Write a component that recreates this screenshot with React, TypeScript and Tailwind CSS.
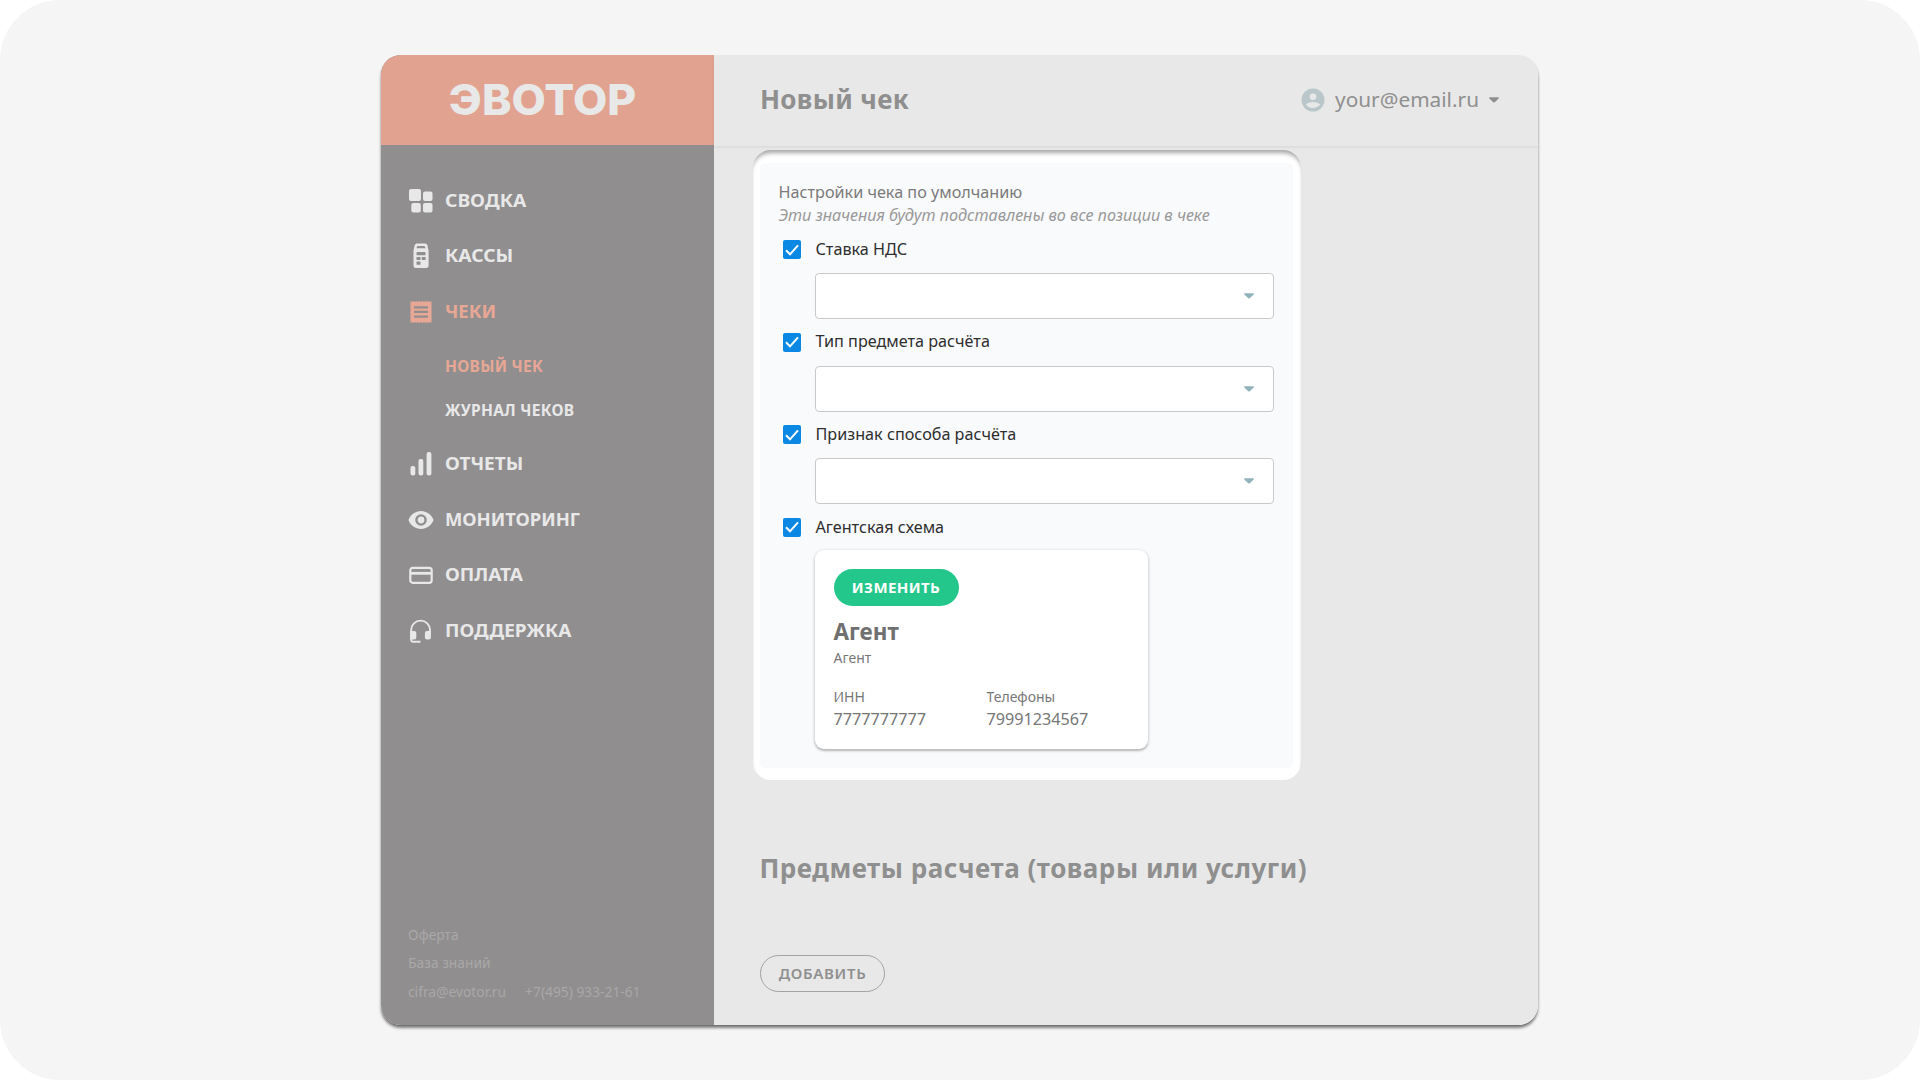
import type { ReactNode } from 'react'

const NAV_TOP = [
  { label: 'СВОДКА', icon: <DashboardIcon />, stretch: 'scale-x-[1.13]' },
  { label: 'КАССЫ', icon: <TerminalIcon />, stretch: 'scale-x-[1.13]' },
  { label: 'ЧЕКИ', icon: <ReceiptIcon />, stretch: 'scale-x-[1.09]', active: true },
]

const NAV_BOTTOM = [
  { label: 'ОТЧЕТЫ', icon: <BarsIcon />, stretch: 'scale-x-[1.12]' },
  { label: 'МОНИТОРИНГ', icon: <EyeIcon />, stretch: 'scale-x-[1.08]' },
  { label: 'ОПЛАТА', icon: <CardIcon />, stretch: 'scale-x-[1.12]' },
  { label: 'ПОДДЕРЖКА', icon: <HeadsetIcon />, stretch: 'scale-x-[1.115]' },
]

const SETTINGS = ['Ставка НДС', 'Тип предмета расчёта', 'Признак способа расчёта']

function DashboardIcon() {
  return (
    <svg width="26" height="26" viewBox="0 0 26 26" fill="currentColor">
      <rect x="1" y="1" width="12" height="12" rx="2" />
      <rect x="15" y="3.5" width="9.5" height="9.5" rx="2" />
      <rect x="3.3" y="15" width="9.5" height="9.5" rx="2" />
      <rect x="15" y="15" width="9.5" height="9.5" rx="2" />
    </svg>
  )
}

function TerminalIcon() {
  return (
    <svg width="26" height="26" viewBox="0 0 26 26">
      <path d="M8.500.5h9a2.500 2.500 0 0 1 2 2l.6 3 .5 2v15a2.500 2.500 0 0 1-2.500 2.500H8a2.500 2.500 0 0 1-2.500-2.500v-15l.5-2 .6-3a2.500 2.500 0 0 1 2-2z" fill="currentColor" />
      <g fill="#908e8f">
        <path d="M9.500 3h7l1.200 2.200H8.300z" />
        <rect x="8.500" y="9" width="9" height="3.300" rx=".8" />
        <rect x="8.500" y="14" width="4" height="3" rx=".5" />
        <rect x="13.800" y="14" width="3.800" height="3" rx=".5" />
        <rect x="8.500" y="18.500" width="4" height="3.200" rx=".5" />
      </g>
    </svg>
  )
}

function ReceiptIcon() {
  return (
    <svg width="26" height="26" viewBox="0 0 26 26">
      <path
        d="M2.500 2l1.500 1 1.500-1L7 3l1.500-1L10 3l1.500-1L13 3l1.500-1L16 3l1.500-1L19 3l1.500-1L22 3l1.500-1v22L22 23l-1.500 1-1.500-1-1.500 1-1.500-1-1.500 1-1.500-1-1.500 1-1.500-1-1.500 1L7 23l-1.500 1L4 23l-1.500 1z"
        fill="currentColor"
      />
      <path d="M6 8.300h14M6 12.900h14M6 17.600h14" stroke="#908e8f" strokeWidth="2.200" />
    </svg>
  )
}

function BarsIcon() {
  return (
    <svg width="26" height="26" viewBox="0 0 26 26" fill="currentColor">
      <rect x="2.500" y="15" width="4.800" height="9.500" rx="2" />
      <rect x="10.500" y="8" width="4.800" height="16.500" rx="2" />
      <rect x="18.600" y="1" width="4.800" height="23.500" rx="2" />
    </svg>
  )
}

function EyeIcon() {
  return (
    <svg width="26" height="26" viewBox="0 0 26 26">
      <path d="M.5 13C2.500 7.600 7.400 4 13 4s10.500 3.600 12.500 9c-2 5.400-6.900 9-12.500 9S2.500 18.400.5 13z" fill="currentColor" />
      <circle cx="13" cy="13" r="4.600" fill="none" stroke="#908e8f" strokeWidth="2.400" />
    </svg>
  )
}

function CardIcon() {
  return (
    <svg width="26" height="26" viewBox="0 0 26 26" fill="none" stroke="currentColor">
      <rect x="2.300" y="5.800" width="21.400" height="15" rx="2.500" strokeWidth="2.200" />
      <path d="M2.500 11.300h21" strokeWidth="2.800" />
    </svg>
  )
}

function HeadsetIcon() {
  return (
    <svg width="26" height="26" viewBox="0 0 26 26">
      <path d="M3.200 21V12a9.400 9.400 0 0 1 18.800 0v4" fill="none" stroke="currentColor" strokeWidth="1.900" />
      <path d="M2.300 13h4a2 2 0 0 1 2 2v4.500a2 2 0 0 1-2 2h-4zM22.900 13h-4a2 2 0 0 0-2 2v4.500a2 2 0 0 0 2 2h2a2 2 0 0 0 2-2z" fill="currentColor" />
      <path d="M3.200 20v2a1.800 1.800 0 0 0 1.800 1.800h7.500" fill="none" stroke="currentColor" strokeWidth="1.900" />
    </svg>
  )
}

function UserIcon() {
  return (
    <svg width="24" height="24" viewBox="0 0 24 24">
      <circle cx="12" cy="12" r="11.500" fill="#b9c7cb" />
      <circle cx="12" cy="8.700" r="3.300" fill="#e8e8e8" />
      <path d="M4.800 16.600c1.400-1.900 4.700-2.700 7.200-2.700s5.800.8 7.200 2.700c-1.600 2.200-4.300 3.500-7.200 3.500s-5.600-1.300-7.200-3.500z" fill="#e8e8e8" />
    </svg>
  )
}

function Caret() {
  return (
    <svg width="10" height="6" viewBox="0 0 10 6">
      <path d="M.8.3h8.400c.7 0 .9.700.5 1.100L5.700 5.200a1 1 0 0 1-1.400 0L.3 1.400C-.1 1 .1.3.8.3z" fill="currentColor" />
    </svg>
  )
}

interface NavItemProps {
  label: string
  icon: ReactNode
  stretch: string
  active?: boolean
}

function NavItem({ label, icon, stretch, active }: NavItemProps) {
  return (
    <div className={`flex h-[55.5px] items-center pl-[27px] text-[17px] font-bold ${active ? 'text-[#e8a795]' : 'text-[#e8e8e8]'}`}>
      <span className="mr-[11px] pt-px">{icon}</span>
      <span className={`origin-left ${stretch}`}>{label}</span>
    </div>
  )
}

function CheckRow({ label }: { label: string }) {
  return (
    <div className="flex h-[19px] items-center">
      <span className="flex h-[19px] w-[18px] items-center justify-center rounded-[2px] bg-[#0b87e4]">
        <svg width="14" height="12" viewBox="0 0 14 12" fill="none" stroke="#fff" strokeWidth="2">
          <path d="M1 6.300l4 4L13 1.300" />
        </svg>
      </span>
      <span className="-mt-px ml-[15px] text-[16.2px] leading-none text-[#2e2e2e]">{label}</span>
    </div>
  )
}

function AgentCard() {
  return (
    <div className="ml-8 mt-[13px] h-[199px] w-[333px] rounded-[9px] bg-white px-[19px] pt-[19px] text-[#777] shadow-[0_1px_3px_1px_rgba(0,0,0,0.12),0_2px_2px_rgba(0,0,0,0.16)]">
      <button className="flex h-[37px] w-[125px] items-center justify-center rounded-full bg-[#23c68b] text-[15px] font-bold tracking-[0.4px] text-white">
        ИЗМЕНИТЬ
      </button>
      <h3 className="mt-[13px] text-[22.5px] font-bold leading-[26px] text-[#707070]">Агент</h3>
      <p className="mt-1 text-sm leading-[18px]">Агент</p>
      <div className="mt-[21px] flex">
        <div className="w-[153px]">
          <p className="text-sm leading-[18px]">ИНН</p>
          <p className="mt-[2px] text-[16.2px] leading-[22px]">7777777777</p>
        </div>
        <div>
          <p className="text-sm leading-[18px]">Телефоны</p>
          <p className="mt-[2px] text-[16.2px] leading-[22px]">79991234567</p>
        </div>
      </div>
    </div>
  )
}

function Sidebar() {
  return (
    <aside className="flex w-[333px] shrink-0 flex-col bg-[#908e8f]">
      <div className="flex h-[90px] items-center justify-center bg-[#e1a28f] pr-[10px]">
        <span className="scale-x-[1.058] font-['Inter'] text-[42px] font-extrabold leading-none text-[#e8e8e8]">ЭВОТОР</span>
      </div>
      <nav className="pt-[27.5px]">
        {NAV_TOP.map((item) => (
          <NavItem key={item.label} {...item} />
        ))}
        <div className="pb-1 pt-[5px] pl-16 text-[15.5px] font-bold tracking-[0.3px]">
          <p className="h-11 leading-[44px] text-[#e8a795]">НОВЫЙ ЧЕК</p>
          <p className="h-11 leading-[44px] text-[#e8e8e8]">ЖУРНАЛ ЧЕКОВ</p>
        </div>
        {NAV_BOTTOM.map((item) => (
          <NavItem key={item.label} {...item} />
        ))}
      </nav>
      <footer className="mt-auto pb-[19px] pl-[27px] text-[13.8px] leading-[28.5px] text-[#a9a8a8]">
        <p>Оферта</p>
        <p>База знаний</p>
        <p className="flex gap-[19px]">
          <span>cifra@evotor.ru</span>
          <span>+7(495) 933-21-61</span>
        </p>
      </footer>
    </aside>
  )
}

export default function App() {
  return (
    <div className="h-[1080px] w-[1920px] overflow-hidden bg-white font-['Noto_Sans',sans-serif]">
      <div className="h-full rounded-[60px] bg-[#f5f5f5] pl-[381px] pt-[55px]">
        <div className="flex h-[970px] w-[1157px] rounded-[20px] shadow-[0_3px_3px_rgba(0,0,0,0.48),0_1px_1px_rgba(0,0,0,0.15)]">
          <div className="flex w-full overflow-hidden rounded-[20px]">
            <Sidebar />
            <main className="flex grow flex-col bg-[#e8e8e8] text-[#8f8f8f]">
              <header className="flex h-[91px] shrink-0 items-center pl-[46px] pr-[39px] shadow-[0_1px_3px_rgba(0,0,0,0.08)]">
                <h1 className="-mt-[2px] grow text-[26px] font-bold tracking-[0.35px]">Новый чек</h1>
                <div className="-mt-[2px] flex items-center gap-[10px]">
                  <UserIcon />
                  <span className="text-[20.8px]">your@email.ru</span>
                  <Caret />
                </div>
              </header>

              <section className="ml-[38.5px] mt-1 h-[630px] w-[548px] shrink-0 rounded-[18px] bg-white px-[7.5px] pb-3 pt-[13px] shadow-[inset_0_5px_4px_-2px_rgba(0,0,0,0.35)]">
                <div className="h-full rounded-[5px] bg-[#f9fafc] pl-[18.5px] pt-[18px]">
                  <p className="text-[16.2px] leading-[23px] text-[#7b7b7b]">Настройки чека по умолчанию</p>
                  <p className="text-[16.2px] italic leading-[23px] text-[#999]">Эти значения будут подставлены во все позиции в чеке</p>
                  <div className="ml-1 mt-[13px]">
                    {SETTINGS.map((label) => (
                      <div key={label} className="h-[92.6px]">
                        <CheckRow label={label} />
                        <div className="ml-8 mt-[14px] flex h-[46px] w-[459px] items-center justify-end rounded-[4px] border border-[#c8c9ca] bg-white pr-[19px] text-[#90b2ba]">
                          <Caret />
                        </div>
                      </div>
                    ))}
                    <CheckRow label="Агентская схема" />
                    <AgentCard />
                  </div>
                </div>
              </section>

              <h2 className="ml-[45.5px] mt-[70px] text-[26px] font-bold leading-[36px] tracking-[0.52px]">
                Предметы расчета (товары или услуги)
              </h2>
              <button className="ml-[46px] mt-[69px] flex h-[37px] w-[125px] items-center justify-center rounded-full border border-[#a3a3a3] text-[15px] font-semibold tracking-[0.7px]">
                ДОБАВИТЬ
              </button>
            </main>
          </div>
        </div>
      </div>
    </div>
  )
}
